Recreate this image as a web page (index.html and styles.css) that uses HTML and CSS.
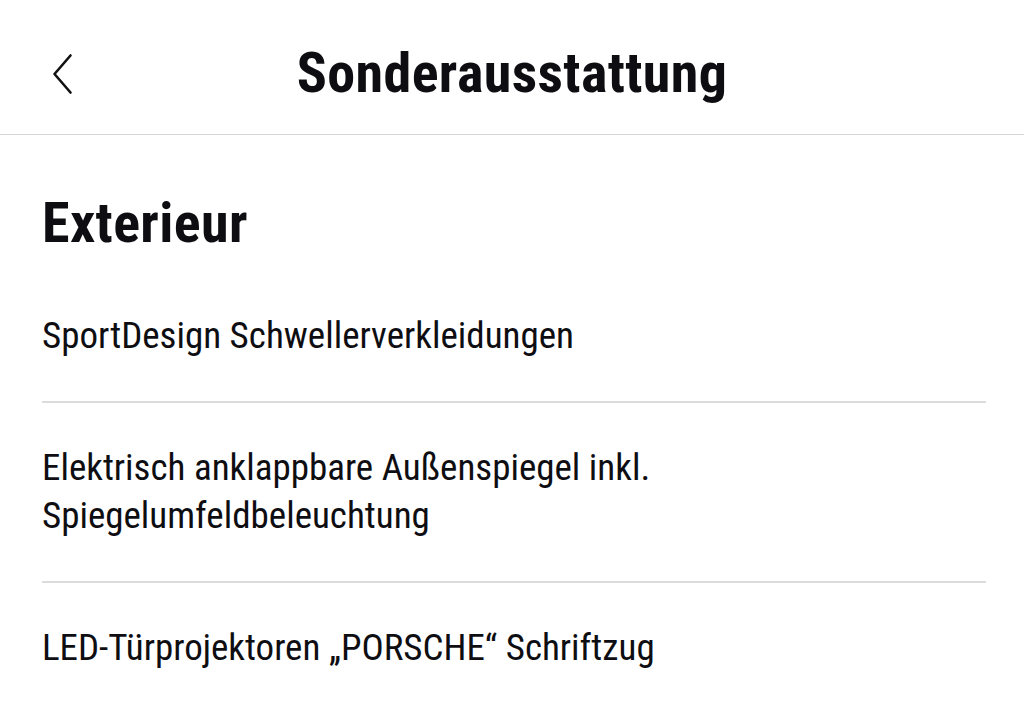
FILE: index.html
```html
<!DOCTYPE html>
<html lang="de">
<head>
<meta charset="utf-8">
<title>Sonderausstattung</title>
<link rel="stylesheet" href="styles.css">
</head>
<body>
<header class="topbar">
  <button class="back" aria-label="Zurück">
    <svg width="22" height="42" viewBox="0 0 22 42" fill="none" stroke="#111" stroke-width="2.6" stroke-linecap="round" stroke-linejoin="round"><path d="M18.5 2.5 L2.5 21 L18.5 39.5"/></svg>
  </button>
  <h1 class="title">Sonderausstattung</h1>
</header>
<main class="content">
  <h2 class="section">Exterieur</h2>
  <ul class="list">
    <li class="item">SportDesign Schwellerverkleidungen</li>
    <li class="item">Elektrisch anklappbare Außenspiegel inkl.<br>Spiegelumfeldbeleuchtung</li>
    <li class="item last">LED-Türprojektoren „PORSCHE“ Schriftzug</li>
  </ul>
</main>
</body>
</html>
```
FILE: styles.css
```css
html, body {
  margin: 0;
  padding: 0;
  background: #ffffff;
  color: #0e0e12;
  font-family: "Roboto Condensed", Roboto, "Liberation Sans", sans-serif;
}
.topbar {
  position: relative;
  height: 134px;
  border-bottom: 1px solid #d4d4d4;
  display: flex;
  align-items: flex-start;
  justify-content: center;
}
.back {
  position: absolute;
  left: 52px;
  top: 53px;
  padding: 0;
  border: 0;
  background: none;
  display: flex;
}
.title {
  margin: 41px 0 0;
  font-size: 56px;
  line-height: 64px;
  font-weight: 700;
  letter-spacing: 0.4px;
}
.content {
  padding: 0 38px 0 42px;
}
.section {
  margin: 56px 0 16px;
  font-size: 56px;
  line-height: 64px;
  font-weight: 700;
  letter-spacing: 0.4px;
}
.list {
  list-style: none;
  margin: 0;
  padding: 0;
}
.item {
  padding: 41px 0;
  font-size: 37px;
  line-height: 48px;
  font-weight: 400;
  border-bottom: 2px solid #dcdcdc;
}
.item.last {
  border-bottom: 0;
}
```
